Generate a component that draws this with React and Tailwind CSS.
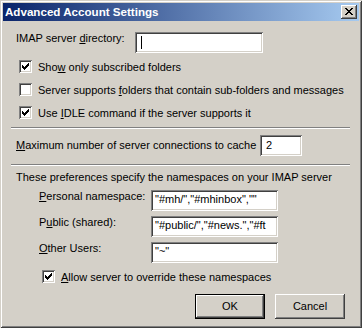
import React from "react";

const sunken =
  "shadow-[inset_1px_1px_#808080,inset_-1px_-1px_#ffffff,inset_2px_2px_#404040,inset_-2px_-2px_#d4d0c8]";
const raised =
  "shadow-[inset_-1px_-1px_#404040,inset_1px_1px_#ffffff,inset_-2px_-2px_#808080,inset_2px_2px_#d4d0c8]";

function Check({ checked }) {
  return (
    <div
      className={`w-[13px] h-[13px] bg-white shrink-0 pl-[3px] pt-[3px] ${sunken}`}
    >
      {checked && (
        <svg
          width="7"
          height="7"
          viewBox="0 0 7 7"
          shapeRendering="crispEdges"
          className="block"
        >
          <path
            fill="#000"
            d="M6 0h1v1H6z M5 1h2v1H5z M0 2h1v1H0z M4 2h3v1H4z M0 3h2v1H0z M3 3h3v1H3z M0 4h5v1H0z M1 5h3v1H1z M2 6h1v1H2z"
          />
        </svg>
      )}
    </div>
  );
}

function U({ children }) {
  return <span className="underline">{children}</span>;
}

function Field({ className = "", children }) {
  return (
    <div
      className={`h-[21px] bg-white pl-[4px] pt-[3px] leading-[13px] whitespace-nowrap overflow-hidden shrink-0 ${sunken} ${className}`}
    >
      {children}
    </div>
  );
}

function Sep() {
  return (
    <div className="ml-[8px] mr-[9px] h-[2px] border-t border-t-[#808080] border-b border-b-white" />
  );
}

export default function App() {
  return (
    <div
      className={`w-[362px] h-[328px] bg-[#d4d0c8] p-[3px] flex flex-col text-[11px] leading-[13px] text-black font-['Liberation_Sans',Arial,sans-serif] shadow-[inset_1px_1px_#d4d0c8,inset_-1px_-1px_#404040,inset_2px_2px_#ffffff,inset_-2px_-2px_#808080]`}
    >
      {/* Title bar */}
      <div className="h-[18px] flex items-center justify-between bg-[linear-gradient(to_right,#0a246a,#a6caf0)] pl-[2px] pr-[2px]">
        <span className="text-white font-bold text-[11.6px] leading-[18px]">
          Advanced Account Settings
        </span>
        <div
          className={`w-[16px] h-[14px] bg-[#d4d0c8] pl-[4px] pt-[3px] ${raised}`}
        >
          <svg
            width="8"
            height="7"
            viewBox="0 0 8 7"
            shapeRendering="crispEdges"
            className="block"
          >
            <path
              fill="#000"
              d="M0 0h2v1H0z M6 0h2v1H6z M1 1h2v1H1z M5 1h2v1H5z M2 2h4v1H2z M3 3h2v1H3z M2 4h4v1H2z M1 5h2v1H1z M5 5h2v1H5z M0 6h2v1H0z M6 6h2v1H6z"
            />
          </svg>
        </div>
      </div>

      {/* Body */}
      <div className="flex flex-col">
        <div className="mt-[11px] pl-[13px] flex items-start">
          <span className="w-[119px] shrink-0">
            IMAP server <U>d</U>irectory:
          </span>
          <Field className="w-[128px] pl-[6px] pt-[4px]">
            <div className="w-px h-[13px] bg-black" />
          </Field>
        </div>

        <div className="mt-[7px] pl-[16px] flex items-start gap-[6px]">
          <Check checked />
          <span className="mt-[1px]">
            Sho<U>w</U> only subscribed folders
          </span>
        </div>
        <div className="mt-[9px] pl-[16px] flex items-start gap-[6px]">
          <Check />
          <span className="mt-[1px]">
            Server supports <U>f</U>olders that contain sub-folders and messages
          </span>
        </div>
        <div className="mt-[9px] pl-[16px] flex items-start gap-[6px]">
          <Check checked />
          <span className="mt-[1px]">
            Use <U>I</U>DLE command if the server supports it
          </span>
        </div>

        <div className="mt-[7px]">
          <Sep />
        </div>

        <div className="mt-[6px] pl-[13px] flex items-center">
          <span className="w-[244px] shrink-0">
            <U>M</U>aximum number of server connections to cache
          </span>
          <Field className="w-[42px] pl-[6px] pt-[4px]">2</Field>
        </div>

        <div className="mt-[8px]">
          <Sep />
        </div>

        <div className="mt-[5px] pl-[13px]">
          These preferences specify the namespaces on your IMAP server
        </div>

        <div className="mt-[6px] pl-[36px] flex items-start">
          <span className="w-[112px] shrink-0">
            <U>P</U>ersonal namespace:
          </span>
          <Field className="w-[127px]">"#mh/","#mhinbox",""</Field>
        </div>
        <div className="mt-[5px] pl-[36px] flex items-start">
          <span className="w-[112px] shrink-0">
            P<U>u</U>blic (shared):
          </span>
          <Field className="w-[127px]">"#public/","#news.","#ft</Field>
        </div>
        <div className="mt-[5px] pl-[36px] flex items-start">
          <span className="w-[112px] shrink-0">
            <U>O</U>ther Users:
          </span>
          <Field className="w-[127px]">"~"</Field>
        </div>

        <div className="mt-[7px] pl-[39px] flex items-start gap-[6px]">
          <Check checked />
          <span className="mt-[1px]">
            <U>A</U>llow server to override these namespaces
          </span>
        </div>

        <div className="mt-[10px] pr-[14px] flex justify-end gap-[10px]">
          <div
            className={`w-[70px] h-[25px] flex items-center justify-center bg-[#d4d0c8] border border-black shadow-[inset_-1px_-1px_#404040,inset_1px_1px_#ffffff,inset_-2px_-2px_#808080]`}
          >
            OK
          </div>
          <div
            className={`w-[70px] h-[25px] flex items-center justify-center bg-[#d4d0c8] ${raised}`}
          >
            Cancel
          </div>
        </div>
      </div>
    </div>
  );
}
